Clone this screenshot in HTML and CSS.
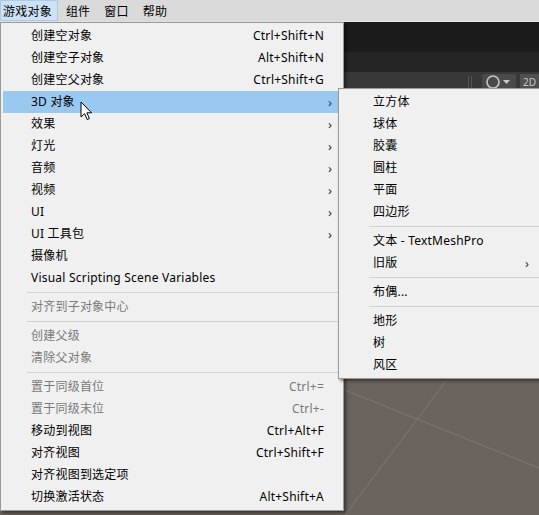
FILE: index.html
```html
<!DOCTYPE html>
<html lang="zh-CN">
<head>
<meta charset="utf-8">
<title>游戏对象菜单</title>
<link rel="stylesheet" href="styles.css">
</head>
<body>
<div class="app">
  <div class="menubar">
    <div class="mb-item active">游戏对象</div>
    <div class="mb-item">组件</div>
    <div class="mb-item">窗口</div>
    <div class="mb-item">帮助</div>
  </div>
  <div class="workspace">
    <div class="panel-top"></div>
    <div class="panel-tabs"></div>
    <div class="toolbar">
      <div class="tb-sep"></div>
      <div class="tb-btn">
        <svg width="30" height="14" viewBox="0 0 30 14"><circle cx="9" cy="8" r="6" fill="none" stroke="#c8c8c8" stroke-width="1.6"/><path d="M19 6 L26 6 L22.5 10 Z" fill="#c8c8c8"/></svg>
      </div>
      <div class="tb-btn2">2D</div>
    </div>
    <div class="scene">
      <svg class="grid" width="539" height="440" viewBox="0 0 539 440" preserveAspectRatio="none">
        <line x1="300" y1="284" x2="539" y2="380" stroke="#82786f" stroke-width="1"/>
        <line x1="470" y1="261" x2="330" y2="447" stroke="#82786f" stroke-width="1"/>
      </svg>
    </div>
  </div>

  <div class="menu main-menu">
    <div class="row"><span class="label">创建空对象</span><span class="sc">Ctrl+Shift+N</span><span class="arr"></span></div>
    <div class="row"><span class="label">创建空子对象</span><span class="sc">Alt+Shift+N</span><span class="arr"></span></div>
    <div class="row"><span class="label">创建空父对象</span><span class="sc">Ctrl+Shift+G</span><span class="arr"></span></div>
    <div class="row hl"><span class="label">3D 对象</span><span class="sc"></span><span class="arr">›</span></div>
    <div class="row"><span class="label">效果</span><span class="sc"></span><span class="arr">›</span></div>
    <div class="row"><span class="label">灯光</span><span class="sc"></span><span class="arr">›</span></div>
    <div class="row"><span class="label">音频</span><span class="sc"></span><span class="arr">›</span></div>
    <div class="row"><span class="label">视频</span><span class="sc"></span><span class="arr">›</span></div>
    <div class="row"><span class="label">UI</span><span class="sc"></span><span class="arr">›</span></div>
    <div class="row"><span class="label">UI 工具包</span><span class="sc"></span><span class="arr">›</span></div>
    <div class="row"><span class="label">摄像机</span><span class="sc"></span><span class="arr"></span></div>
    <div class="row"><span class="label">Visual Scripting Scene Variables</span><span class="sc"></span><span class="arr"></span></div>
    <div class="sep"></div>
    <div class="row dis"><span class="label">对齐到子对象中心</span><span class="sc"></span><span class="arr"></span></div>
    <div class="sep"></div>
    <div class="row dis"><span class="label">创建父级</span><span class="sc"></span><span class="arr"></span></div>
    <div class="row dis"><span class="label">清除父对象</span><span class="sc"></span><span class="arr"></span></div>
    <div class="sep"></div>
    <div class="row dis"><span class="label">置于同级首位</span><span class="sc">Ctrl+=</span><span class="arr"></span></div>
    <div class="row dis"><span class="label">置于同级末位</span><span class="sc">Ctrl+-</span><span class="arr"></span></div>
    <div class="row"><span class="label">移动到视图</span><span class="sc">Ctrl+Alt+F</span><span class="arr"></span></div>
    <div class="row"><span class="label">对齐视图</span><span class="sc">Ctrl+Shift+F</span><span class="arr"></span></div>
    <div class="row"><span class="label">对齐视图到选定项</span><span class="sc"></span><span class="arr"></span></div>
    <div class="row"><span class="label">切换激活状态</span><span class="sc">Alt+Shift+A</span><span class="arr"></span></div>
  </div>

  <div class="menu sub-menu">
    <div class="row"><span class="label">立方体</span><span class="arr"></span></div>
    <div class="row"><span class="label">球体</span><span class="arr"></span></div>
    <div class="row"><span class="label">胶囊</span><span class="arr"></span></div>
    <div class="row"><span class="label">圆柱</span><span class="arr"></span></div>
    <div class="row"><span class="label">平面</span><span class="arr"></span></div>
    <div class="row"><span class="label">四边形</span><span class="arr"></span></div>
    <div class="sep"></div>
    <div class="row"><span class="label">文本 - TextMeshPro</span><span class="arr"></span></div>
    <div class="row"><span class="label">旧版</span><span class="arr">›</span></div>
    <div class="sep"></div>
    <div class="row"><span class="label">布偶...</span><span class="arr"></span></div>
    <div class="sep"></div>
    <div class="row"><span class="label">地形</span><span class="arr"></span></div>
    <div class="row"><span class="label">树</span><span class="arr"></span></div>
    <div class="row"><span class="label">风区</span><span class="arr"></span></div>
  </div>

  <svg class="cursor" width="14" height="21" viewBox="0 0 14 21">
    <path d="M1 1 L1 16 L4.6 12.6 L7.2 18.6 L9.4 17.6 L6.9 11.8 L11.6 11.8 Z" fill="#ffffff" stroke="#000000" stroke-width="1" stroke-linejoin="miter"/>
  </svg>
</div>
</body>
</html>
```

FILE: styles.css
```css
* { box-sizing: border-box; }
html, body { margin: 0; padding: 0; }
body {
  width: 539px;
  height: 515px;
  overflow: hidden;
  font-family: "Noto Sans", "Noto Sans CJK SC", sans-serif;
  font-size: 12px;
  letter-spacing: 0.22px;
  color: #000;
  background: #6a625c;
}
.app {
  position: relative;
  width: 539px;
  height: 515px;
  display: flex;
  flex-direction: column;
}
.menubar {
  height: 22px;
  flex: none;
  display: flex;
  align-items: stretch;
  background: #dadada;
  border-bottom: 1px solid #e6e6e6;
}
.mb-item {
  padding: 0 6px;
  line-height: 21px;
  border: 1px solid transparent;
}
.mb-item.active {
  padding: 0 5px 0 2px;
  background: #cde2f5;
  border-color: #a9cbe8;
  margin-right: 1px;
}
.workspace {
  flex: 1;
  display: flex;
  flex-direction: column;
}
.panel-top { height: 30px; background: #1b1b1b; }
.panel-tabs { height: 20px; background: #252525; }
.toolbar {
  height: 16px;
  background: #383838;
  display: flex;
  align-items: flex-end;
  padding-left: 468px;
  gap: 4px;
  overflow: hidden;
}
.tb-sep {
  width: 4px;
  height: 12px;
  border-left: 1px solid #555;
  border-right: 1px solid #555;
  margin-right: 6px;
}
.tb-btn {
  width: 36px;
  height: 14px;
  background: #4a4a4a;
  border-radius: 2px 2px 0 0;
  display: flex;
  align-items: center;
  justify-content: center;
}
.tb-btn2 {
  width: 20px;
  height: 14px;
  background: #505050;
  color: #c8c8c8;
  font-size: 10px;
  letter-spacing: 0;
  line-height: 16px;
  padding-left: 3px;
}
.scene {
  flex: 1;
  position: relative;
  background: #6a625c;
  overflow: hidden;
}
.grid { display: block; }

.menu {
  position: absolute;
  background: #f0f0f0;
  border: 1px solid #9a9a9a;
  padding: 2px;
  box-shadow: 2px 2px 3px rgba(0,0,0,0.45);
}
.main-menu {
  left: 0;
  top: 22px;
  width: 344px;
}
.sub-menu {
  left: 338px;
  top: 88px;
  width: 210px;
}
.row {
  height: 22px;
  line-height: 22px;
  display: flex;
  align-items: center;
  padding-left: 28px;
  white-space: nowrap;
}
.sub-menu .row { padding-left: 32px; }
.row .label { flex: 1; }
.row .sc { margin-right: 0; }
.row .arr {
  width: 12px;
  margin-right: 5px;
  text-align: center;
  font-size: 13px;
  color: #333;
}
.sub-menu .row .arr { margin-right: 12px; }
.row.hl { background: #99c9f1; }
.row.dis { color: #7a7a7a; }
.sep {
  height: 7px;
  margin-left: 24px;
  border-top: 3px solid transparent;
  display: flex;
  flex-direction: column;
}
.sep::before {
  content: "";
  display: block;
  height: 1px;
  background: #d0d0d0;
}
.sub-menu .sep { margin-left: 28px; }
.cursor {
  position: absolute;
  left: 80px;
  top: 101px;
}
```
